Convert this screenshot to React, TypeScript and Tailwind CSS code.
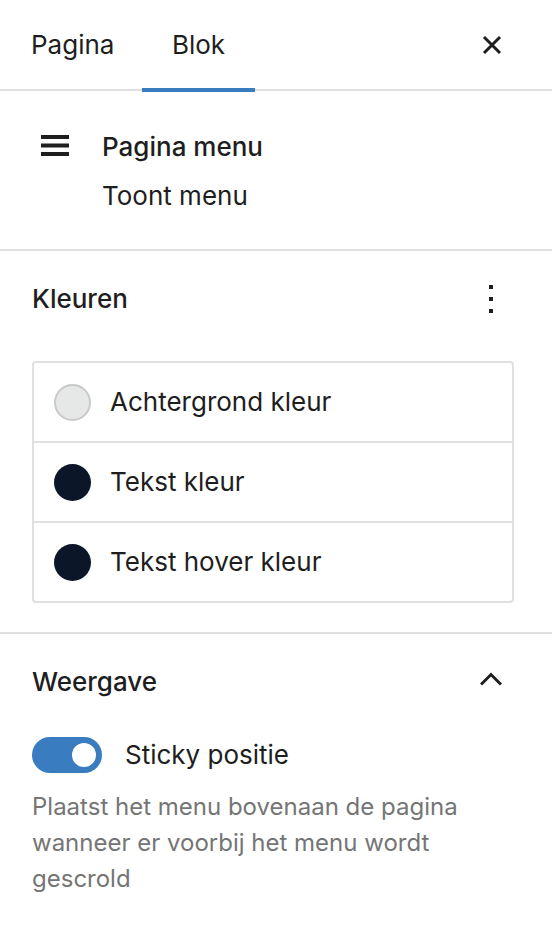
import React from "react";

function CloseIcon() {
  return (
    <svg width="20" height="20" viewBox="0 0 20 20" fill="none">
      <path d="M2 2L18 18M18 2L2 18" stroke="#1e1e1e" strokeWidth="3" />
    </svg>
  );
}

function MenuIcon() {
  return (
    <svg width="28" height="21" viewBox="0 0 28 21" fill="#1e1e1e">
      <rect x="0" y="0" width="28" height="4" />
      <rect x="0" y="8.5" width="28" height="4" />
      <rect x="0" y="17" width="28" height="4" />
    </svg>
  );
}

function DotsIcon() {
  return (
    <svg width="4" height="28" viewBox="0 0 4 28" fill="#1e1e1e">
      <rect x="0" y="0" width="4" height="4" />
      <rect x="0" y="12" width="4" height="4" />
      <rect x="0" y="24" width="4" height="4" />
    </svg>
  );
}

function ChevronUp() {
  return (
    <svg width="22" height="14" viewBox="0 0 22 14" fill="none">
      <path d="M1 12.5L11 2.5L21 12.5" stroke="#1e1e1e" strokeWidth="3" />
    </svg>
  );
}

const colors = [
  { label: "Achtergrond kleur", swatch: "bg-[#e6e7e7] border-2 border-[#c9c9c9]" },
  { label: "Tekst kleur", swatch: "bg-[#0b1729]" },
  { label: "Tekst hover kleur", swatch: "bg-[#0b1729]" },
];

export default function App() {
  return (
    <div className="w-[552px] h-[928px] bg-white text-[#1e1e1e] font-['Inter',sans-serif] text-[26px] leading-[36px]">
      {/* Tabs */}
      <div className="h-[91px] flex items-center border-b-2 border-[#e0e0e0]">
        <button className="pl-[31px] w-[142px] text-left h-full flex items-center">Pagina</button>
        <button className="relative w-[113px] h-full flex items-center justify-center">
          Blok
          <span className="absolute left-0 right-0 bottom-[-3px] h-[4px] bg-[#3a7cc0]" />
        </button>
        <div className="flex-1" />
        <button className="mr-[50px] flex items-center" aria-label="Close">
          <CloseIcon />
        </button>
      </div>

      {/* Block card */}
      <div className="border-b-2 border-[#e0e0e0] pt-[38px] pb-[35px] pl-[41px] flex">
        <div className="w-[61px] pt-[6px]">
          <MenuIcon />
        </div>
        <div className="flex flex-col gap-[13px]">
          <div className="font-medium">Pagina menu</div>
          <div>Toont menu</div>
        </div>
      </div>

      {/* Kleuren */}
      <div className="border-b-2 border-[#e0e0e0] pl-8 pr-[38px] pt-[30px] pb-[29px]">
        <div className="flex items-center justify-between h-[36px]">
          <div className="font-medium">Kleuren</div>
          <div className="mr-[21px]">
            <DotsIcon />
          </div>
        </div>
        <div className="mt-[44px] border-2 border-[#e0e0e0] rounded-[4px]">
          {colors.map((c, i) => (
            <div
              key={c.label}
              className={`flex items-center pl-[20px] gap-[19px] ${i > 0 ? "h-[80px] border-t-2 border-[#e0e0e0]" : "h-[78px]"}`}
            >
              <span className={`w-[37px] h-[37px] rounded-full ${c.swatch}`} />
              <span>{c.label}</span>
            </div>
          ))}
        </div>
      </div>

      {/* Weergave */}
      <div className="px-8 pt-[30px]">
        <div className="flex items-center justify-between h-[36px]">
          <div className="font-medium">Weergave</div>
          <div className="mr-[18px] mb-[6px]">
            <ChevronUp />
          </div>
        </div>
        <div className="mt-[37px] flex items-center gap-[23px]">
          <span className="w-[70px] h-[36px] rounded-full bg-[#3a7cc0] flex items-center justify-end pr-[6px]">
            <span className="w-[24px] h-[24px] rounded-full bg-white" />
          </span>
          <span>Sticky positie</span>
        </div>
        <p className="mt-[16px] text-[24px] leading-[36px] text-[#757575] pr-[60px]">
          Plaatst het menu bovenaan de pagina wanneer er voorbij het menu wordt gescrold
        </p>
      </div>
    </div>
  );
}
